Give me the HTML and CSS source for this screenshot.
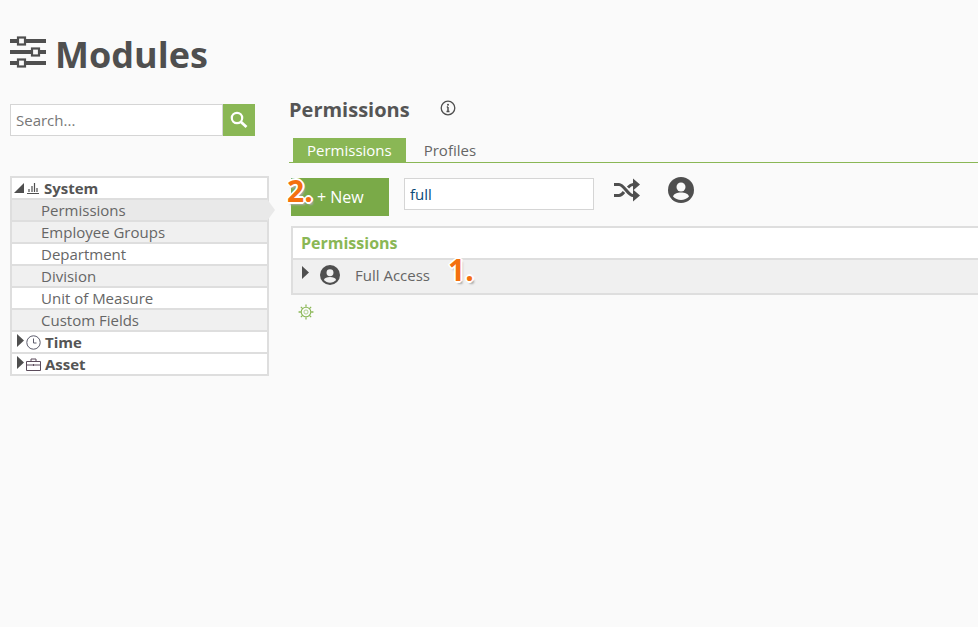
FILE: index.html
```html
<!DOCTYPE html>
<html lang="en">
<head>
    <meta charset="UTF-8">
    <meta name="viewport" content="width=device-width,initial-scale=1">
    <title>Modules</title>
    <link rel="stylesheet" href="styles.css">
</head>
<body>
    <div class="header">
        <svg class="title-icon" width="36" height="32" viewBox="0 0 36 32">
            <path d="M0 5h36M0 16h36M0 27h36" stroke="#4f4f4f" stroke-width="4" fill="none"/>
            <rect x="8" y="1.500" width="7" height="7" fill="#fafafa" stroke="#4f4f4f" stroke-width="2.200"/>
            <rect x="22" y="12.500" width="7" height="7" fill="#fafafa" stroke="#4f4f4f" stroke-width="2.200"/>
            <rect x="8" y="23.500" width="7" height="7" fill="#fafafa" stroke="#4f4f4f" stroke-width="2.200"/>
        </svg>
        <h1>Modules</h1>
    </div>

    <div class="layout">
        <div class="sidebar">
            <div class="search">
                <input class="search-input" type="text" placeholder="Search...">
                <div class="search-btn">
                    <svg width="20" height="20" viewBox="0 0 20 20">
                        <circle cx="8" cy="8" r="5.2" fill="none" stroke="#fff" stroke-width="2.2"/>
                        <path d="M12 12l5.5 5" stroke="#fff" stroke-width="2.8" fill="none"/>
                    </svg>
                </div>
            </div>

            <div class="tree">
                <div class="tree-row group">
                    <svg class="arrow-open" width="10" height="10" viewBox="0 0 10 10"><path d="M10 0v10H0z" fill="#4f4f4f"/></svg>
                    <svg class="group-icon" width="12" height="12" viewBox="0 0 12 12">
                        <path d="M0 11.5h12M2 10V7M5 10V4M7.500 10V1M10 10V6" stroke="#4f4f4f" stroke-width="1.2" fill="none"/>
                    </svg>
                    System
                </div>
                <div class="tree-row item selected">Permissions</div>
                <div class="tree-row item alt">Employee Groups</div>
                <div class="tree-row item">Department</div>
                <div class="tree-row item alt">Division</div>
                <div class="tree-row item">Unit of Measure</div>
                <div class="tree-row item alt">Custom Fields</div>
                <div class="tree-row group closed">
                    <svg class="arrow-closed" width="7" height="13" viewBox="0 0 7 13"><path d="M0 0l7 6.500L0 13z" fill="#4f4f4f"/></svg>
                    <svg width="15" height="15" viewBox="0 0 15 15">
                        <circle cx="7.500" cy="7.500" r="6.700" fill="none" stroke="#5b5b6b" stroke-width="1"/>
                        <path d="M7.500 3.500v4.500h3" fill="none" stroke="#5b5b6b" stroke-width="1"/>
                    </svg>
                    Time
                </div>
                <div class="tree-row group closed">
                    <svg class="arrow-closed" width="7" height="13" viewBox="0 0 7 13"><path d="M0 0l7 6.500L0 13z" fill="#4f4f4f"/></svg>
                    <svg width="15" height="13" viewBox="0 0 15 13">
                        <path d="M.5 3.500h14v9H.5zM.5 7h14M5 3.500V1h5v2.500M7.500 6v2" fill="none" stroke="#5b4b5b" stroke-width="1"/>
                    </svg>
                    Asset
                </div>
            </div>
        </div>

        <div class="main">
            <div class="page-title">
                <h2>Permissions</h2>
                <svg width="16" height="16" viewBox="0 0 16 16">
                    <circle cx="8" cy="8" r="6.800" fill="none" stroke="#4f4f4f" stroke-width="1.300"/>
                    <path d="M8 7v4.500M6.500 11.500h3M6.800 7H8" stroke="#4f4f4f" stroke-width="1.500" fill="none"/>
                    <circle cx="8" cy="4.800" r="1" fill="#4f4f4f"/>
                </svg>
            </div>

            <div class="tabs">
                <div class="tab active">Permissions</div>
                <div class="tab">Profiles</div>
            </div>

            <div class="toolbar">
                <div class="new-btn">+ New<span class="marker marker-two">2.</span></div>
                <input class="filter" type="text" value="full">
                <svg class="shuffle" width="26" height="24" viewBox="0 0 26 24">
                    <path d="M0 6.500h5c5 0 9 11 14 11h3M0 17.500h5c2 0 3.500-1.500 5-3.500M14 9.500c1.500-1.700 3-3 5-3h3" fill="none" stroke="#4f4f4f" stroke-width="3"/>
                    <path d="M19 .5l7 6-7 6zM19 11.500l7 6-7 6z" fill="#4f4f4f"/>
                </svg>
                <svg class="profile" width="26" height="26" viewBox="0 0 26 26">
                    <circle cx="13" cy="13" r="13" fill="#4f4f4f"/>
                    <circle cx="13" cy="10" r="4.500" fill="#fafafa"/>
                    <path d="M5 19.500c1-3 4-4 8-4s7 1 8 4c-2 2-5 3.500-8 3.500s-6-1.500-8-3.500z" fill="#fafafa"/>
                </svg>
            </div>

            <div class="grid">
                <div class="grid-head">Permissions</div>
                <div class="grid-row">
                    <svg class="row-arrow" width="7" height="13" viewBox="0 0 7 13"><path d="M0 0l7 6.500L0 13z" fill="#4f4f4f"/></svg>
                    <svg class="row-icon" width="20" height="20" viewBox="0 0 26 26">
                        <circle cx="13" cy="13" r="13" fill="#4f4f4f"/>
                        <circle cx="13" cy="10" r="4.500" fill="#f0f0f0"/>
                        <path d="M5 19.500c1-3 4-4 8-4s7 1 8 4c-2 2-5 3.500-8 3.500s-6-1.500-8-3.500z" fill="#f0f0f0"/>
                    </svg>
                    <span class="row-name">Full Access</span>
                    <span class="marker marker-one">1.</span>
                </div>
            </div>

            <svg class="gear" width="16" height="16" viewBox="0 0 14 14">
                <circle cx="7" cy="7" r="4.200" fill="none" stroke="#8ab755" stroke-width="1"/>
                <circle cx="7" cy="7" r="1.800" fill="none" stroke="#a9cb82" stroke-width=".8"/>
                <path d="M7 .5v2M7 11.500v2M.5 7h2M11.500 7h2M2.500 2.500l1.500 1.500M10 10l1.500 1.500M11.500 2.500L10 4M4 10l-1.500 1.500" stroke="#8ab755" stroke-width="1.100" fill="none"/>
            </svg>
        </div>
    </div>
</body>
</html>
```
FILE: styles.css
```css
* {
    margin: 0;
    padding: 0;
    box-sizing: border-box;
}

html, body {
    height: 100%;
    overflow: hidden;
}

body {
    font-family: 'Open Sans', 'Liberation Sans', sans-serif;
    font-size: 15px;
    color: #555;
    background-color: #fafafa;
}

.header {
    display: flex;
    align-items: flex-start;
    gap: 11px;
    padding: 30px 0 0 10px;
    height: 104px;
}

.title-icon {
    margin-top: 6px;
}

.header h1 {
    font-size: 36px;
    line-height: 50px;
    font-weight: 700;
    color: #4f4f4f;
    margin-left: -2px;
}

.layout {
    display: flex;
}

.sidebar {
    width: 279px;
    padding-left: 10px;
    flex-shrink: 0;
}

.search {
    display: flex;
    width: 245px;
    height: 32px;
    margin-bottom: 40px;
}

.search-input {
    width: 213px;
    height: 32px;
    border: 1px solid #d5d5d5;
    background-color: #fff;
    padding: 0 5px;
    font: 15px 'Open Sans', sans-serif;
    color: #555;
    outline: none;
}

.search-input::placeholder {
    color: #777;
    opacity: 1;
}

.search-btn {
    width: 32px;
    height: 32px;
    background-color: #8ab755;
    display: flex;
    align-items: center;
    justify-content: center;
}

.tree {
    width: 259px;
    border: 2px solid #dedede;
    border-top-width: 1px;
    border-bottom-width: 1px;
    background-color: #dedede;
    display: flex;
    flex-direction: column;
    gap: 2px;
    padding: 1px 0;
}

.tree-row {
    height: 20px;
    line-height: 20px;
    background-color: #fff;
    display: flex;
    align-items: center;
    white-space: nowrap;
    position: relative;
}

.item {
    padding-left: 29px;
    color: #666;
}

.alt {
    background-color: #f0f0f0;
}

.selected {
    background-color: #e9e9e9;
}

.selected::after {
    content: "";
    position: absolute;
    left: 100%;
    top: -1px;
    border-left: 8px solid #e9e9e9;
    border-top: 11px solid transparent;
    border-bottom: 11px solid transparent;
}

.group {
    font-weight: 700;
    color: #555;
    padding-left: 2px;
}

.arrow-open {
    margin-right: 3px;
}

.group-icon {
    margin-right: 5px;
}

.closed {
    padding-left: 5px;
    gap: 2px;
}

.closed svg:nth-of-type(2) {
    margin-right: 2px;
}

.arrow-closed {
    margin-top: -4px;
}

.main {
    flex: 1;
    min-width: 0;
    padding-left: 10px;
    margin-right: -20px;
}

.page-title {
    display: flex;
    align-items: flex-start;
    gap: 30px;
    height: 34px;
}

.page-title h2 {
    font-size: 20px;
    line-height: 12px;
    font-weight: 700;
    color: #555;
}

.page-title svg {
    margin-top: -4px;
}

.tabs {
    display: flex;
    height: 25px;
    border-bottom: 1px solid #8ab755;
    padding-left: 4px;
    margin-bottom: 15px;
}

.tab {
    height: 24px;
    line-height: 25px;
    padding: 0 14px;
    color: #666;
    margin-right: 4px;
}

.tab.active {
    background-color: #8ab755;
    color: #fff;
}

.toolbar {
    display: flex;
    align-items: flex-start;
    height: 48px;
    margin-left: 2px;
}

.new-btn {
    position: relative;
    width: 98px;
    height: 38px;
    line-height: 38px;
    padding-left: 26px;
    background-color: #7aaa48;
    color: #fff;
    font-size: 16px;
}

.filter {
    width: 190px;
    height: 32px;
    margin-left: 15px;
    border: 1px solid #d5d5d5;
    background-color: #fff;
    padding: 0 5px;
    font: 15px 'Open Sans', sans-serif;
    color: #0b4a76;
    outline: none;
}

.shuffle {
    margin: 0 0 0 20px;
}

.profile {
    margin: -1px 0 0 28px;
}

.grid {
    border: 2px solid #dedede;
    background-color: #dedede;
    margin-left: 2px;
}

.grid-head {
    height: 30px;
    line-height: 30px;
    padding-left: 8px;
    background-color: #fff;
    color: #8ab755;
    font-size: 16px;
    font-weight: 700;
    margin-bottom: 2px;
}

.grid-row {
    position: relative;
    display: flex;
    align-items: center;
    height: 33px;
    padding-left: 9px;
    background-color: #f0f0f0;
    color: #666;
}

.row-arrow {
    margin-top: -9px;
    margin-right: 11px;
}

.row-icon {
    margin-top: -3px;
}

.row-name {
    margin: -3px 0 0 15px;
}

.marker {
    position: absolute;
    font-size: 30px;
    font-weight: 700;
    line-height: 30px;
    color: #f4700f;
    text-shadow: 2px 0 0 #fff, -2px 0 0 #fff, 0 2px 0 #fff, 0 -2px 0 #fff, 1px 1px 0 #fff, -1px 1px 0 #fff, 1px -1px 0 #fff, -1px -1px 0 #fff, 2px 3px 2px #aaa;
}

.marker-one {
    left: 155px;
    top: -5px;
}

.marker-two {
    left: -4px;
    top: -2px;
}

.gear {
    display: block;
    margin: 9px 0 0 9px;
}
```
